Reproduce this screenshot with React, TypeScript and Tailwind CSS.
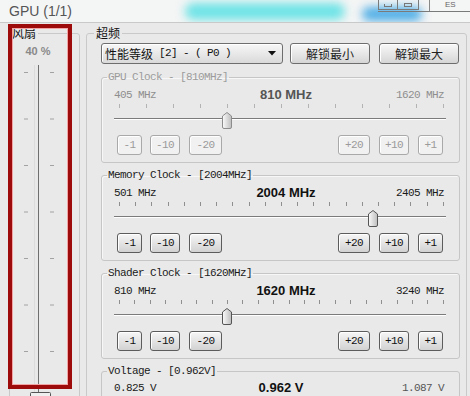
import React from "react";

const mono = "font-['Liberation_Mono','Noto_Sans_CJK_SC',monospace] text-[11px] tracking-[-0.6px]";
const cjk = "font-['Noto_Sans_CJK_SC','Liberation_Sans',sans-serif]";
const sans = "font-['Liberation_Sans',Arial,sans-serif]";

type Clock = {
    title: string;
    min: string;
    cur: string;
    max: string;
    frac: number;
    ticks: number;
    disabled?: boolean;
};

const clocks: Clock[] = [
    { title: "GPU Clock - [810MHz]", min: "405 MHz", cur: "810 MHz", max: "1620 MHz", frac: 1 / 3, ticks: 12, disabled: true },
    { title: "Memory Clock - [2004MHz]", min: "501 MHz", cur: "2004 MHz", max: "2405 MHz", frac: 0.78, ticks: 20 },
    { title: "Shader Clock - [1620MHz]", min: "810 MHz", cur: "1620 MHz", max: "3240 MHz", frac: 1 / 3, ticks: 21 },
];

function StepButton({ label, w, disabled }: { label: string; w: string; disabled?: boolean }) {
    return (
        <div
            className={`${w} flex h-[20px] items-center justify-center rounded-[3px] border ${mono} ${
                disabled
                    ? "border-[#a9a9a9] bg-[#f1f1f1] text-[#9a9a9a] shadow-[inset_1px_1px_0_#fff]"
                    : "border-[#5c5c5c] bg-[linear-gradient(#f6f6f6,#d2d2d2)] text-[#111] shadow-[inset_1px_1px_0_#fff]"
            }`}
        >
            {label}
        </div>
    );
}

function Thumb({ disabled }: { disabled?: boolean }) {
    return (
        <svg width="10" height="17" viewBox="0 0 10 17">
            <defs>
                <linearGradient id="tg" x1="0" y1="0" x2="1" y2="0">
                    <stop offset="0" stopColor="#fbfbfb" />
                    <stop offset="1" stopColor="#bdbdbd" />
                </linearGradient>
            </defs>
            <path
                d="M0.5 4 L5 0.5 L9.5 4 V15 Q9.5 16.5 8 16.5 H2 Q0.5 16.5 0.5 15 Z"
                fill="url(#tg)"
                stroke={disabled ? "#8c8c8c" : "#555"}
            />
        </svg>
    );
}

function ClockGroup({ c, first }: { c: Clock; first?: boolean }) {
    const center = 5 + c.frac * 325;
    return (
        <fieldset
            className={`${first ? "mt-[7px]" : "mt-[6px]"} w-[359px] rounded-[3px] border border-[#c6c6c6] pb-[7px] shadow-[inset_1px_1px_0_#f7f7f7]`}
        >
            <legend className={`ml-[5px] px-[1px] leading-[12px] ${mono} ${c.disabled ? "text-[#9c9c9c]" : "text-[#1a1a1a]"}`}>
                {c.title}
            </legend>
            <div className="mt-[5px] grid h-[14px] grid-cols-[1fr_auto_1fr] items-center pl-[12px] pr-[15px] leading-[14px]">
                <span className={`${mono} ${c.disabled ? "text-[#8e8e8e]" : "text-[#1a1a1a]"}`}>{c.min}</span>
                <span className={`${sans} translate-x-[7px] text-[13px] font-bold ${c.disabled ? "text-[#555]" : "text-[#111]"}`}>
                    {c.cur}
                </span>
                <span className={`${mono} text-right ${c.disabled ? "text-[#8e8e8e]" : "text-[#1a1a1a]"}`}>{c.max}</span>
            </div>
            <div className="relative mt-[2px] ml-[12px] mr-[13px] h-[26px]">
                <div className="mt-[2px] flex h-[4px] justify-between pl-[5px] pr-[2px]">
                    {Array.from({ length: c.ticks + 1 }).map((_, i) => (
                        <div key={i} className={`w-px ${c.disabled ? "bg-[#b3b3b3]" : "bg-[#8f8f8f]"}`} />
                    ))}
                </div>
                <div className="mt-[10px] h-[2px] border-t border-b border-t-[#7b7b7b] border-b-white" />
                <div className="absolute top-[8px]" style={{ left: center - 5 }}>
                    <Thumb disabled={c.disabled} />
                </div>
            </div>
            <div className="mt-[5px] flex pl-[15px] pr-[16px]">
                <div className="flex gap-[8px]">
                    <StepButton label="-1" w="w-[25px]" disabled={c.disabled} />
                    <StepButton label="-10" w="w-[30px]" disabled={c.disabled} />
                    <div className="ml-px">
                        <StepButton label="-20" w="w-[33px]" disabled={c.disabled} />
                    </div>
                </div>
                <div className="ml-auto flex gap-[9px]">
                    <StepButton label="+20" w="w-[32px]" disabled={c.disabled} />
                    <StepButton label="+10" w="w-[30px]" disabled={c.disabled} />
                    <StepButton label="+1" w="w-[25px]" disabled={c.disabled} />
                </div>
            </div>
        </fieldset>
    );
}

function FanSlider() {
    const ys = [14, 60.5, 107, 153.5, 200, 246.5, 293, 339.5];
    return (
        <svg width="56" height="345" viewBox="0 0 56 345">
            <line x1="28.5" y1="7" x2="28.5" y2="345" stroke="#6f6f6f" />
            <line x1="24.5" y1="7" x2="24.5" y2="345" stroke="#dcdcdc" />
            {ys.map((y) => (
                <g key={y} stroke="#a2a2a2">
                    <line x1="14" y1={y + 0.5} x2="18" y2={y + 0.5} />
                    <line x1="40" y1={y + 0.5} x2="44" y2={y + 0.5} />
                </g>
            ))}
            <rect x="20.5" y="334.5" width="20" height="12" rx="1" fill="#efefef" stroke="#555" />
        </svg>
    );
}

export default function App() {
    return (
        <div className="relative h-[396px] w-[470px] overflow-hidden bg-[#e9e9e9]">
            {/* title bar */}
            <div className="relative flex h-[23px] items-start overflow-hidden border-b border-[#c9c9c9] bg-[#f4f5f5]">
                <div className="absolute left-[185px] top-[3px] h-[17px] w-[160px] rounded-full bg-[#6fe3e6] blur-[5px]" />
                <div className="absolute left-[362px] top-[7px] h-[14px] w-[60px] rounded-full bg-[#4faee6] blur-[5px]" />
                <span className={`${sans} relative ml-[9px] mt-[3px] text-[14px] leading-[16px] text-[#555]`}>GPU (1/1)</span>
                <div className="relative ml-auto flex h-[12px] w-[92px] items-start border-b border-[#7a7a7a]">
                    <div className="flex h-[10px] w-[20px] items-end justify-center border-x border-b border-[#7a7a7a] pb-[2px]">
                        <div className="h-[3px] w-[8px] border border-t-0 border-[#777]" />
                    </div>
                    <div className="flex h-[10px] w-[21px] items-end justify-center border-r border-b border-[#7a7a7a] pb-[2px]">
                        <div className="h-[4px] w-[8px] border border-[#777]" />
                    </div>
                    <div className="h-[11px] w-[11px] border-r border-[#888]" />
                    <span className={`${sans} ml-[15px] mt-[1px] text-[8px] leading-[8px] text-[#666]`}>ES</span>
                </div>
            </div>

            <div className="flex items-start pt-[3px]">
                {/* fan */}
                <fieldset className="ml-[9px] h-[380px] w-[71px] rounded-[3px] border border-[#c9c9c9]">
                    <legend className={`px-[2px] text-[12px] leading-[14px] text-[#111] ${cjk}`}>风扇</legend>
                    <div className="flex w-[56px] flex-col items-center">
                        <span className={`${sans} mt-[4px] text-[11px] font-bold leading-[14px] text-[#8a8a8a]`}>40 %</span>
                        <FanSlider />
                    </div>
                </fieldset>

                {/* overclock */}
                <fieldset className="ml-[6px] h-[390px] w-[381px] rounded-[3px] border border-[#c9c9c9] pl-[14px] pr-[6px]">
                    <legend className={`ml-[-7px] px-[2px] text-[12px] leading-[14px] text-[#111] ${cjk}`}>超频</legend>
                    <div className="mt-[3px] flex items-center">
                        <div className="flex h-[21px] w-[182px] items-center rounded-[3px] border border-[#6e6e6e] bg-[linear-gradient(#f7f7f7,#dadada)] pl-[3px] pr-[6px] shadow-[inset_1px_1px_0_#fff]">
                            <span className={`${cjk} text-[12px] leading-[14px] text-[#111]`}>性能等级</span>
                            <span className={`${mono} whitespace-pre text-[#111]`}> [2] - ( P0 )</span>
                            <svg className="ml-auto" width="8" height="5" viewBox="0 0 8 5">
                                <path d="M0 0 H8 L4 4.5 Z" fill="#111" />
                            </svg>
                        </div>
                        <div className={`ml-[7px] flex h-[21px] w-[80px] items-center justify-center rounded-[3px] border border-[#6e6e6e] bg-[linear-gradient(#f8f8f8,#d6d6d6)] shadow-[inset_1px_1px_0_#fff] ${cjk} text-[12px] text-[#222]`}>
                            解锁最小
                        </div>
                        <div className={`ml-[9px] flex h-[21px] w-[80px] items-center justify-center rounded-[3px] border border-[#6e6e6e] bg-[linear-gradient(#f8f8f8,#d6d6d6)] shadow-[inset_1px_1px_0_#fff] ${cjk} text-[12px] text-[#222]`}>
                            解锁最大
                        </div>
                    </div>

                    {clocks.map((c, i) => (
                        <ClockGroup key={c.title} c={c} first={i === 0} />
                    ))}

                    <fieldset className="mt-[6px] h-[60px] w-[359px] rounded-[3px] border border-[#c6c6c6]">
                        <legend className={`ml-[5px] px-[1px] leading-[12px] ${mono} text-[#1a1a1a]`}>Voltage - [0.962V]</legend>
                        <div className="mt-[4px] grid h-[14px] grid-cols-[1fr_auto_1fr] items-center pl-[12px] pr-[15px] leading-[14px]">
                            <span className={`${mono} text-[#1a1a1a]`}>0.825 V</span>
                            <span className={`${sans} translate-x-[2px] text-[13px] font-bold text-[#111]`}>0.962 V</span>
                            <span className={`${mono} text-right text-[#555]`}>1.087 V</span>
                        </div>
                    </fieldset>
                </fieldset>
            </div>

            {/* red highlight frame drawn over the fan panel */}
            <div className="absolute left-[8px] top-[24px] h-[365px] w-[64px] border-[4px] border-[#9d0b0b] shadow-[inset_0_0_0_1px_#f2a3a3]" />
        </div>
    );
}
